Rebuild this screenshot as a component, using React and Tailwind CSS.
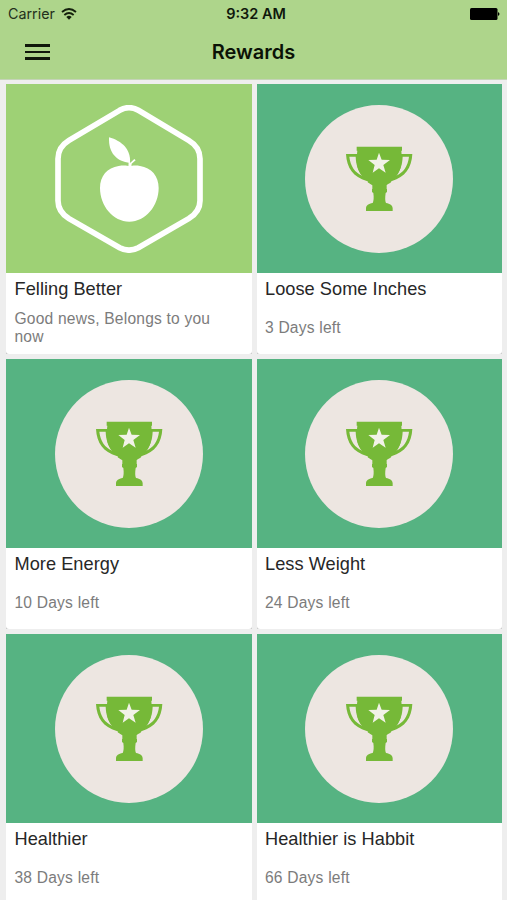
const REWARDS = [
  { title: 'Felling Better', text: 'Good news, Belongs to you now', earned: true },
  { title: 'Loose Some Inches', text: '3 Days left' },
  { title: 'More Energy', text: '10 Days left' },
  { title: 'Less Weight', text: '24 Days left' },
  { title: 'Healthier', text: '38 Days left' },
  { title: 'Healthier is Habbit', text: '66 Days left' },
];

const WifiIcon = () => (
  <svg className="w-4 h-3" viewBox="0 0 48 36" fill="none" stroke="#14200c" strokeWidth="5.5">
    <path d="M3 12 Q24 -6 45 12" />
    <path d="M10 21 Q24 9 38 21" />
    <path d="M16 27 Q24 20 32 27 L24 35Z" fill="#14200c" stroke="none" />
  </svg>
);

const BatteryIcon = () => (
  <svg className="w-[30px] h-3" viewBox="0 0 30 12">
    <rect x="0" y="0" width="27.5" height="12" rx="1.5" fill="#000" />
    <path d="M28 4 Q31 6 28 8Z" fill="#000" />
  </svg>
);

const AppleBadge = () => (
  <svg className="w-[148px] h-[148px]" viewBox="45 45 444 444" fill="#fff">
    <path
      d="M239 61 Q267 45 295 61 L446 151 Q480 171 480 206 V332 Q480 365 446 386 L295 473 Q267 488 239 473 L87 386 Q54 365 54 332 V206 Q54 171 87 151Z"
      fill="none"
      stroke="#fff"
      strokeWidth="17"
    />
    <path d="M207 142 C246 153 273 178 270 219 C229 214 205 189 207 142Z" />
    <path d="M265 232 L266 216 L271 218 L283 207 L287 211 L275 221 L274 232Z" />
    <path d="M269 229 C277 226 290 226 300 228 C334 233 356 258 356 294 C356 348 316 395 268 395 C220 395 180 348 180 294 C180 258 202 233 236 228 C248 226 261 226 269 229Z" />
  </svg>
);

const TrophyBadge = () => (
  <svg className="w-[148px] h-[148px]" viewBox="-75 -75 444 444">
    <circle cx="147" cy="147" r="222" fill="#ede6e1" />
    <g fill="#76b938">
      <path
        fillRule="evenodd"
        d="M48 72 H247 C245 114 225 141 186 153 H110 C70 141 50 114 48 72Z M58 80 C61 108 75 128 97 137 C84 122 78 104 77 80Z M218 80 C217 104 211 122 198 137 C220 128 234 108 237 80Z"
      />
      <path d="M80 50 H216 V62 H214 C217 95 214 122 198 139 C193 145 184 147 184 155 C183 159 176 160 170 165 V177 H171 V186 L167 189 C165 203 165 213 168 219 C180 221 188 226 188 235 V243 H108 V235 C108 226 116 221 128 219 C131 213 132 203 130 189 L126 186 V177 H127 V166 C121 160 113 159 113 155 C113 148 103 145 98 139 C80 122 78 95 82 62 H80Z" />
    </g>
    <path d="M147 68 L155 89 L180 90 L160 105 L167 128 L147 115 L128 128 L134 105 L115 90 L140 89Z" fill="#f2f2e7" />
  </svg>
);

const RewardCard = ({ title, text, earned }) => (
  <div className="h-[270px] bg-[#c8c8c8]">
    <div className="h-full bg-white rounded-b-[3px] overflow-hidden flex flex-col">
      <div className={`h-[189px] flex-shrink-0 flex items-center justify-center ${earned ? 'bg-[#9ed175]' : 'bg-[#56b382]'}`}>
        {earned ? <AppleBadge /> : <TrophyBadge />}
      </div>
      <div className="pl-[8.5px] pt-1 flex flex-col">
        <h2 className="text-[18.2px] leading-6 tracking-[0.04px] text-[#272727]">{title}</h2>
        <div className="h-[54px] flex items-center">
          <p className="text-[15.6px] leading-[18px] tracking-[0.2px] text-[#7c7c7c] max-w-[212px]">{text}</p>
        </div>
      </div>
    </div>
  </div>
);

const App = () => (
  <div className="w-full h-[900px] overflow-hidden bg-[#eeeeee] font-['Liberation_Sans',sans-serif]">
    <header className="h-20 bg-[#aed58b] border-b border-[#c5d3b8] font-['Inter',sans-serif]">
      {/* Status bar */}
      <div className="h-7 pl-2 pr-[7px] grid grid-cols-3 items-center">
        <div className="flex items-center gap-[6px] text-[14.3px] text-[#24301b]">
          <span>Carrier</span>
          <WifiIcon />
        </div>
        <span className="text-center text-[14.5px] font-semibold text-[#10180b] pl-1">9:32 AM</span>
        <div className="flex justify-end">
          <BatteryIcon />
        </div>
      </div>

      {/* Title bar */}
      <div className="h-12 px-[25px] grid grid-cols-[25px_1fr_25px] items-center">
        <div className="flex flex-col gap-[3.5px]">
          <span className="h-[2.7px] bg-[#10180b]" />
          <span className="h-[2.7px] bg-[#10180b]" />
          <span className="h-[2.7px] bg-[#10180b]" />
        </div>
        <h1 className="text-center text-[20px] leading-6 font-semibold text-[#0b1206]">Rewards</h1>
      </div>
    </header>

    <main className="pt-1 pl-1.5 pr-[5px] grid grid-cols-2 gap-[5px]">
      {REWARDS.map((reward) => (
        <RewardCard key={reward.title} {...reward} />
      ))}
    </main>
  </div>
);

export default App;
